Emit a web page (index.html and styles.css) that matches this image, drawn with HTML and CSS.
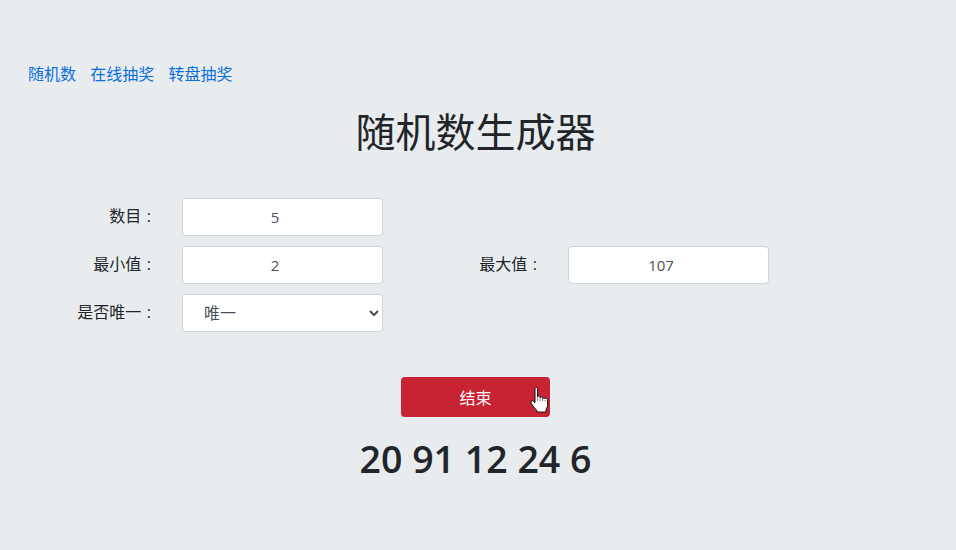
FILE: index.html
```html
<!DOCTYPE html>
<html lang="zh-CN">
<head>
    <meta charset="UTF-8">
    <title>随机数生成器</title>
    <link rel="stylesheet" href="styles.css">
</head>
<body>
    <nav class="top-nav">
        <a href="#">随机数</a>
        <a href="#">在线抽奖</a>
        <a href="#">转盘抽奖</a>
    </nav>

    <h1>随机数生成器</h1>

    <form class="main-form">
        <label>数目 :</label>
        <input class="field" type="number" value="5">
        <span></span>
        <span></span>

        <label>最小值 :</label>
        <input class="field" type="number" value="2">
        <label>最大值 :</label>
        <input class="field" type="number" value="107">

        <label>是否唯一 :</label>
        <select class="field field-select">
            <option>唯一</option>
            <option>不唯一</option>
        </select>
    </form>

    <div class="actions">
        <button class="stop-btn" type="button">
            结束
            <svg class="hand-cursor" width="20" height="27" viewBox="0 0 20 27">
                <path d="M5 1.600c0-1.500 2.600-1.500 2.600 0v8.200c0-1.400 2.500-1.400 2.500 0v.9c0-1.300 2.500-1.300 2.500 0v1c0-1.200 2.400-1.200 2.400 0 0-.8 2.600-.8 2.600.9v4.800c0 2.200-.7 3.500-1.600 5V25H6.800v-1.700C4.800 21.600 2.800 18.800 1.200 16.200c-1-1.800.8-3.300 2.200-2L5 15.600z" fill="#fff" stroke="#111" stroke-width="1" stroke-linejoin="round"/>
                <path d="M7.600 10v4M10.100 11v3.500M12.600 12v2.500M15 13v1.500" stroke="#555" stroke-width="0.700" fill="none"/>
            </svg>
        </button>
    </div>

    <div class="result">20 91 12 24 6</div>
</body>
</html>
```

FILE: styles.css
```css
* {
    box-sizing: border-box;
}

body {
    margin: 0;
    min-height: 100vh;
    padding-top: 62px;
    background: #e9ecef;
    color: #212529;
    font-family: "Open Sans", "Noto Sans CJK SC", sans-serif;
    font-size: 16px;
}

.top-nav {
    display: flex;
    gap: 14.2px;
    height: 24px;
    padding-left: 28px;
    line-height: 24px;
}

.top-nav a {
    color: #0a6fdc;
    text-decoration: none;
}

h1 {
    margin: 22px 0 0;
    height: 48px;
    padding-right: 5px;
    font-size: 40px;
    font-weight: 400;
    line-height: 48px;
    text-align: center;
}

.main-form {
    display: grid;
    grid-template-columns: 153px 201px 127px 201px;
    grid-auto-rows: 38px;
    column-gap: 29px;
    row-gap: 10px;
    margin-top: 42px;
}

.main-form label {
    padding-right: 2px;
    line-height: 36px;
    text-align: right;
    white-space: nowrap;
    word-spacing: 1.5px;
}

.field {
    width: 100%;
    height: 38px;
    padding: 6px 12px;
    background: #fff;
    border: 1px solid #ced4da;
    border-radius: 4px;
    color: #495057;
    font-family: inherit;
    font-size: 15px;
    text-align: center;
}

.field-select {
    padding-left: 17px;
    font-size: 16px;
    text-align: left;
}

.actions {
    display: flex;
    justify-content: center;
    margin-top: 45px;
    padding-right: 5px;
}

.stop-btn {
    position: relative;
    width: 149px;
    height: 40px;
    background: #c82333;
    border: none;
    border-radius: 4px;
    color: #fff;
    font-family: inherit;
    font-size: 16px;
}

.hand-cursor {
    position: absolute;
    left: 129px;
    top: 10px;
}

.result {
    margin-top: 17px;
    padding-right: 5px;
    font-size: 37.5px;
    font-weight: 600;
    line-height: 49px;
    text-align: center;
}
```
